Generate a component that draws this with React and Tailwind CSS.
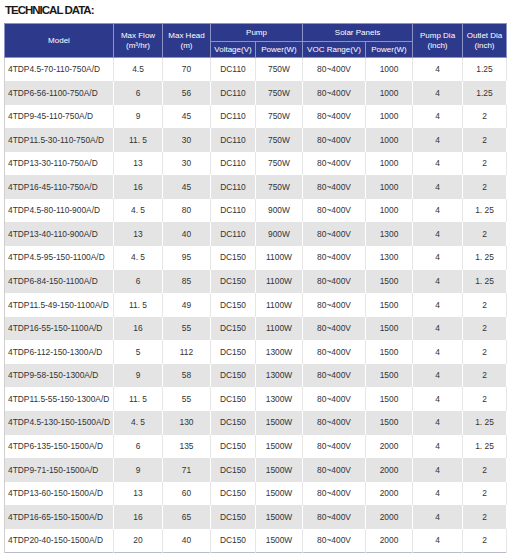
import React from "react";

const ROWS = [
  ["4TDP4.5-70-110-750A/D", "4.5", "70", "DC110", "750W", "1000", "1.25"],
  ["4TDP6-56-1100-750A/D", "6", "56", "DC110", "750W", "1000", "1.25"],
  ["4TDP9-45-110-750A/D", "9", "45", "DC110", "750W", "1000", "2"],
  ["4TDP11.5-30-110-750A/D", "11. 5", "30", "DC110", "750W", "1000", "2"],
  ["4TDP13-30-110-750A/D", "13", "30", "DC110", "750W", "1000", "2"],
  ["4TDP16-45-110-750A/D", "16", "45", "DC110", "750W", "1000", "2"],
  ["4TDP4.5-80-110-900A/D", "4. 5", "80", "DC110", "900W", "1000", "1. 25"],
  ["4TDP13-40-110-900A/D", "13", "40", "DC110", "900W", "1300", "2"],
  ["4TDP4.5-95-150-1100A/D", "4. 5", "95", "DC150", "1100W", "1300", "1. 25"],
  ["4TDP6-84-150-1100A/D", "6", "85", "DC150", "1100W", "1500", "1. 25"],
  ["4TDP11.5-49-150-1100A/D", "11. 5", "49", "DC150", "1100W", "1500", "2"],
  ["4TDP16-55-150-1100A/D", "16", "55", "DC150", "1100W", "1500", "2"],
  ["4TDP6-112-150-1300A/D", "5", "112", "DC150", "1300W", "1500", "2"],
  ["4TDP9-58-150-1300A/D", "9", "58", "DC150", "1300W", "1500", "2"],
  ["4TDP11.5-55-150-1300A/D", "11. 5", "55", "DC150", "1300W", "1500", "2"],
  ["4TDP4.5-130-150-1500A/D", "4. 5", "130", "DC150", "1500W", "1500", "1. 25"],
  ["4TDP6-135-150-1500A/D", "6", "135", "DC150", "1500W", "2000", "1. 25"],
  ["4TDP9-71-150-1500A/D", "9", "71", "DC150", "1500W", "2000", "2"],
  ["4TDP13-60-150-1500A/D", "13", "60", "DC150", "1500W", "2000", "2"],
  ["4TDP16-65-150-1500A/D", "16", "65", "DC150", "1500W", "2000", "2"],
  ["4TDP20-40-150-1500A/D", "20", "40", "DC150", "1500W", "2000", "2"],
];

const th = "border border-[#8b93c4] font-normal leading-[10px] p-0";

const App = () => {
  return (
    <div
      className="w-[510px] h-[559px] bg-white overflow-hidden"
      style={{ fontFamily: '"Liberation Sans", Arial, sans-serif' }}
    >
      <h1 className="pl-[5px] pt-[3px] h-[23px] text-[11.5px] font-bold tracking-[-1px] text-[#1a1a1a] leading-[14px]">
        TECHNICAL DATA:
      </h1>

      <table className="ml-[4px] w-[502px] table-fixed border-collapse">
        <colgroup>
          <col className="w-[109px]" />
          <col className="w-[49px]" />
          <col className="w-[48px]" />
          <col className="w-[45px]" />
          <col className="w-[47px]" />
          <col className="w-[63px]" />
          <col className="w-[47px]" />
          <col className="w-[50px]" />
          <col className="w-[44px]" />
        </colgroup>
        <thead className="bg-[#2d3a8c] text-white text-[8px]">
          <tr className="h-[18px]">
            <th rowSpan={2} className={th}>Model</th>
            <th rowSpan={2} className={th}>
              Max Flow<br />(m³/hr)
            </th>
            <th rowSpan={2} className={th}>
              Max Head<br />(m)
            </th>
            <th colSpan={2} className={th}>Pump</th>
            <th colSpan={2} className={th}>Solar Panels</th>
            <th rowSpan={2} className={th}>
              Pump Dia<br />(inch)
            </th>
            <th rowSpan={2} className={th}>
              Outlet Dia<br />(inch)
            </th>
          </tr>
          <tr className="h-[16px]">
            <th className={th}>Voltage(V)</th>
            <th className={th}>Power(W)</th>
            <th className={th}>VOC Range(V)</th>
            <th className={th}>Power(W)</th>
          </tr>
        </thead>
        <tbody className="text-[8.4px] text-[#333]">
          {ROWS.map((r, i) => {
            const gray = i % 2 === 1;
            const cell = `p-0 border-x ${gray ? "border-white" : "border-[#e6e6e6]"}`;
            return (
              <tr
                key={r[0]}
                className={`h-[23.57px] ${gray ? "bg-[#e4e4e4]" : "bg-white"} ${
                  i === ROWS.length - 1 ? "border-b border-[#b8bccf]" : ""
                }`}
              >
                <td className={`${cell} pl-[3px] text-left border-l-[#cfcfcf] whitespace-nowrap`}>{r[0]}</td>
                <td className={`${cell} text-center`}>{r[1]}</td>
                <td className={`${cell} text-center`}>{r[2]}</td>
                <td className={`${cell} text-center`}>{r[3]}</td>
                <td className={`${cell} text-center`}>{r[4]}</td>
                <td className={`${cell} text-center`}>80~400V</td>
                <td className={`${cell} text-center`}>{r[5]}</td>
                <td className={`${cell} text-center`}>4</td>
                <td className={`${cell} text-center`}>{r[6]}</td>
              </tr>
            );
          })}
        </tbody>
      </table>
    </div>
  );
};

export default App;
